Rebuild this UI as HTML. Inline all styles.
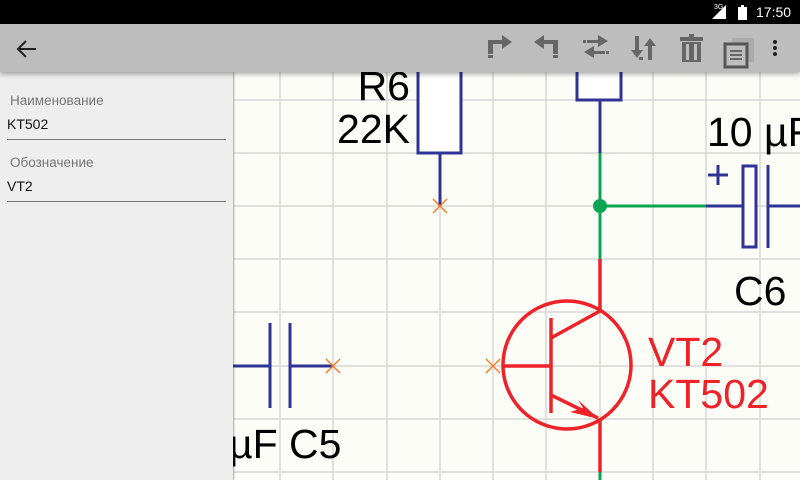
<!DOCTYPE html>
<html><head><meta charset="utf-8"><style>
body{margin:0;width:800px;height:480px;overflow:hidden;font-family:"Liberation Sans",sans-serif;position:relative;background:#fdfdf8}
#sb{position:absolute;left:0;top:0;width:800px;height:24px;background:#000;color:#fff}
#tb{position:absolute;left:0;top:24px;width:800px;height:48px;background:#bdbdbd;box-shadow:0 2px 5px rgba(0,0,0,.35);z-index:3}
#panel{position:absolute;left:0;top:72px;width:233px;height:408px;background:#eeeeee;box-shadow:1px 0 2px rgba(0,0,0,.25);z-index:2}
.lbl{position:absolute;left:10px;font-size:13.5px;color:#757575}
.val{position:absolute;left:7px;font-size:14px;color:#111}
.ln{position:absolute;left:7px;width:219px;height:1px;background:#777}
</style></head><body>
<svg style="position:absolute;left:0;top:0" width="800" height="480">
<g stroke="#d6d6d6" stroke-width="1.5">
<line x1="233" y1="47" x2="233" y2="480"/><line x1="280" y1="47" x2="280" y2="480"/><line x1="333" y1="47" x2="333" y2="480"/><line x1="387" y1="47" x2="387" y2="480"/><line x1="440" y1="47" x2="440" y2="480"/><line x1="493" y1="47" x2="493" y2="480"/><line x1="546" y1="47" x2="546" y2="480"/><line x1="600" y1="47" x2="600" y2="480"/><line x1="653" y1="47" x2="653" y2="480"/><line x1="706" y1="47" x2="706" y2="480"/><line x1="760" y1="47" x2="760" y2="480"/>
<line x1="233" y1="100" x2="800" y2="100"/><line x1="233" y1="153" x2="800" y2="153"/><line x1="233" y1="206" x2="800" y2="206"/><line x1="233" y1="259" x2="800" y2="259"/><line x1="233" y1="312" x2="800" y2="312"/><line x1="233" y1="366" x2="800" y2="366"/><line x1="233" y1="419" x2="800" y2="419"/><line x1="233" y1="472" x2="800" y2="472"/>
</g>
<g stroke="#303396" stroke-width="3" fill="#fff">
<rect x="418" y="60" width="43" height="93"/>
<line x1="440" y1="153" x2="440" y2="206"/>
<rect x="577" y="50" width="44" height="50"/>
<line x1="600" y1="100" x2="600" y2="153"/>
<rect x="743" y="166" width="13" height="81"/>
<line x1="768" y1="165" x2="768" y2="248"/>
<line x1="706" y1="206" x2="743" y2="206"/><line x1="768" y1="206" x2="800" y2="206"/>
<line x1="708" y1="175" x2="728" y2="175"/><line x1="718" y1="165" x2="718" y2="185"/>
<line x1="270" y1="323" x2="270" y2="408"/><line x1="290" y1="323" x2="290" y2="408"/>
<line x1="233" y1="366" x2="270" y2="366"/><line x1="290" y1="366" x2="333" y2="366"/>
</g>
<g stroke="#0aa552" stroke-width="3"><line x1="600" y1="153" x2="600" y2="259"/><line x1="600" y1="206" x2="706" y2="206"/><line x1="600" y1="472" x2="600" y2="480"/></g>
<circle cx="600" cy="206" r="7" fill="#0aa552"/>
<g stroke="#ee2228" stroke-width="3.5" fill="none">
<circle cx="567" cy="365" r="64"/>
<line x1="600" y1="259" x2="600" y2="311"/><line x1="600" y1="419" x2="600" y2="472"/>
<line x1="551" y1="318" x2="551" y2="413"/><line x1="502" y1="366" x2="551" y2="366"/>
<line x1="551" y1="338" x2="600" y2="311"/><line x1="551" y1="395" x2="598" y2="418"/>
</g>
<path d="M599 419 L570 412 L583 408 L578 400 Z" fill="#ee2228"/>
<g stroke="#f07a20" stroke-width="1.3">
<line x1="433" y1="199" x2="447" y2="213"/><line x1="447" y1="199" x2="433" y2="213"/>
<line x1="326" y1="359" x2="340" y2="373"/><line x1="340" y1="359" x2="326" y2="373"/>
<line x1="486" y1="359" x2="500" y2="373"/><line x1="500" y1="359" x2="486" y2="373"/>
</g>
<g font-family="Liberation Sans, sans-serif" font-size="41" fill="#000">
<text x="410" y="100" text-anchor="end">R6</text>
<text x="410" y="143" text-anchor="end">22K</text>
<text x="707" y="146">10 µF</text>
<text x="734" y="305">C6</text>
<text x="229" y="458">µF C5</text>
<text x="648" y="366" fill="#ee2228">VT2</text>
<text x="648" y="408" fill="#ee2228">KT502</text>
</g>
</svg>
<div id="sb"><span style="position:absolute;left:714px;top:4px;font-size:7px">3G</span>
<svg style="position:absolute;left:712px;top:5px" width="14" height="14"><path d="M0 14 L14 14 L14 0 Z" fill="#fff"/></svg>
<svg style="position:absolute;left:738px;top:5px" width="9" height="15"><rect x="0" y="2" width="9" height="13" fill="#fff"/><rect x="3" y="0" width="3" height="2" fill="#fff"/></svg>
<span style="position:absolute;left:756px;top:4px;font-size:14px">17:50</span></div>
<div id="tb">
<svg style="position:absolute;left:16px;top:14px" width="22" height="22"><path d="M20 11 H3 M10 3 L2 11 L10 19" stroke="#222" stroke-width="2" fill="none"/></svg>
<svg style="position:absolute;left:480px;top:0" width="320" height="48" fill="#666">
<path d="M8 30 V16 H22 V11 L32 18 L22 25 V20 H13 V30Z"/><rect x="8" y="31" width="5" height="3"/>
<path d="M78 30 V16 H64 V11 L54 18 L64 25 V20 H73 V30Z"/><rect x="73" y="31" width="5" height="3"/>
<path d="M107 16 H118 V11 L128 17 L118 23 V19 H107Z"/><rect x="103" y="16" width="3" height="3"/>
<path d="M125 27 H114 V22 L104 28 L114 34 V30 H125Z"/><rect x="126" y="27" width="3" height="3"/>
<path d="M155 12 H159 V26 H163 L157 34 L151 26 H155Z"/><path d="M168 22 V36 H172 V22 H176 L170 14 L164 22Z"/><rect x="159" y="33" width="4" height="3"/>
<path d="M200 13 H223 V17 H200Z M209 10 H214 V13 H209Z M202 18 H221 V38 H202Z"/>
<rect x="206" y="20" width="3" height="16" fill="#bdbdbd"/><rect x="214" y="20" width="3" height="16" fill="#bdbdbd"/>
<rect x="252" y="14" width="22" height="24" fill="#9e9e9e" opacity=".6"/>
<rect x="245" y="20" width="22" height="23" fill="#bdbdbd" stroke="#555" stroke-width="3"/>
<rect x="250" y="26" width="12" height="2"/><rect x="250" y="30" width="12" height="2"/><rect x="250" y="34" width="12" height="2"/>
<circle cx="295" cy="18" r="2" fill="#222"/><circle cx="295" cy="24" r="2" fill="#222"/><circle cx="295" cy="30" r="2" fill="#222"/>
</svg>
</div>
<div id="panel">
<div class="lbl" style="top:21px">Наименование</div>
<div class="val" style="top:44px">KT502</div>
<div class="ln" style="top:67px"></div>
<div class="lbl" style="top:83px">Обозначение</div>
<div class="val" style="top:106px">VT2</div>
<div class="ln" style="top:129px"></div>
</div>
</body></html>
